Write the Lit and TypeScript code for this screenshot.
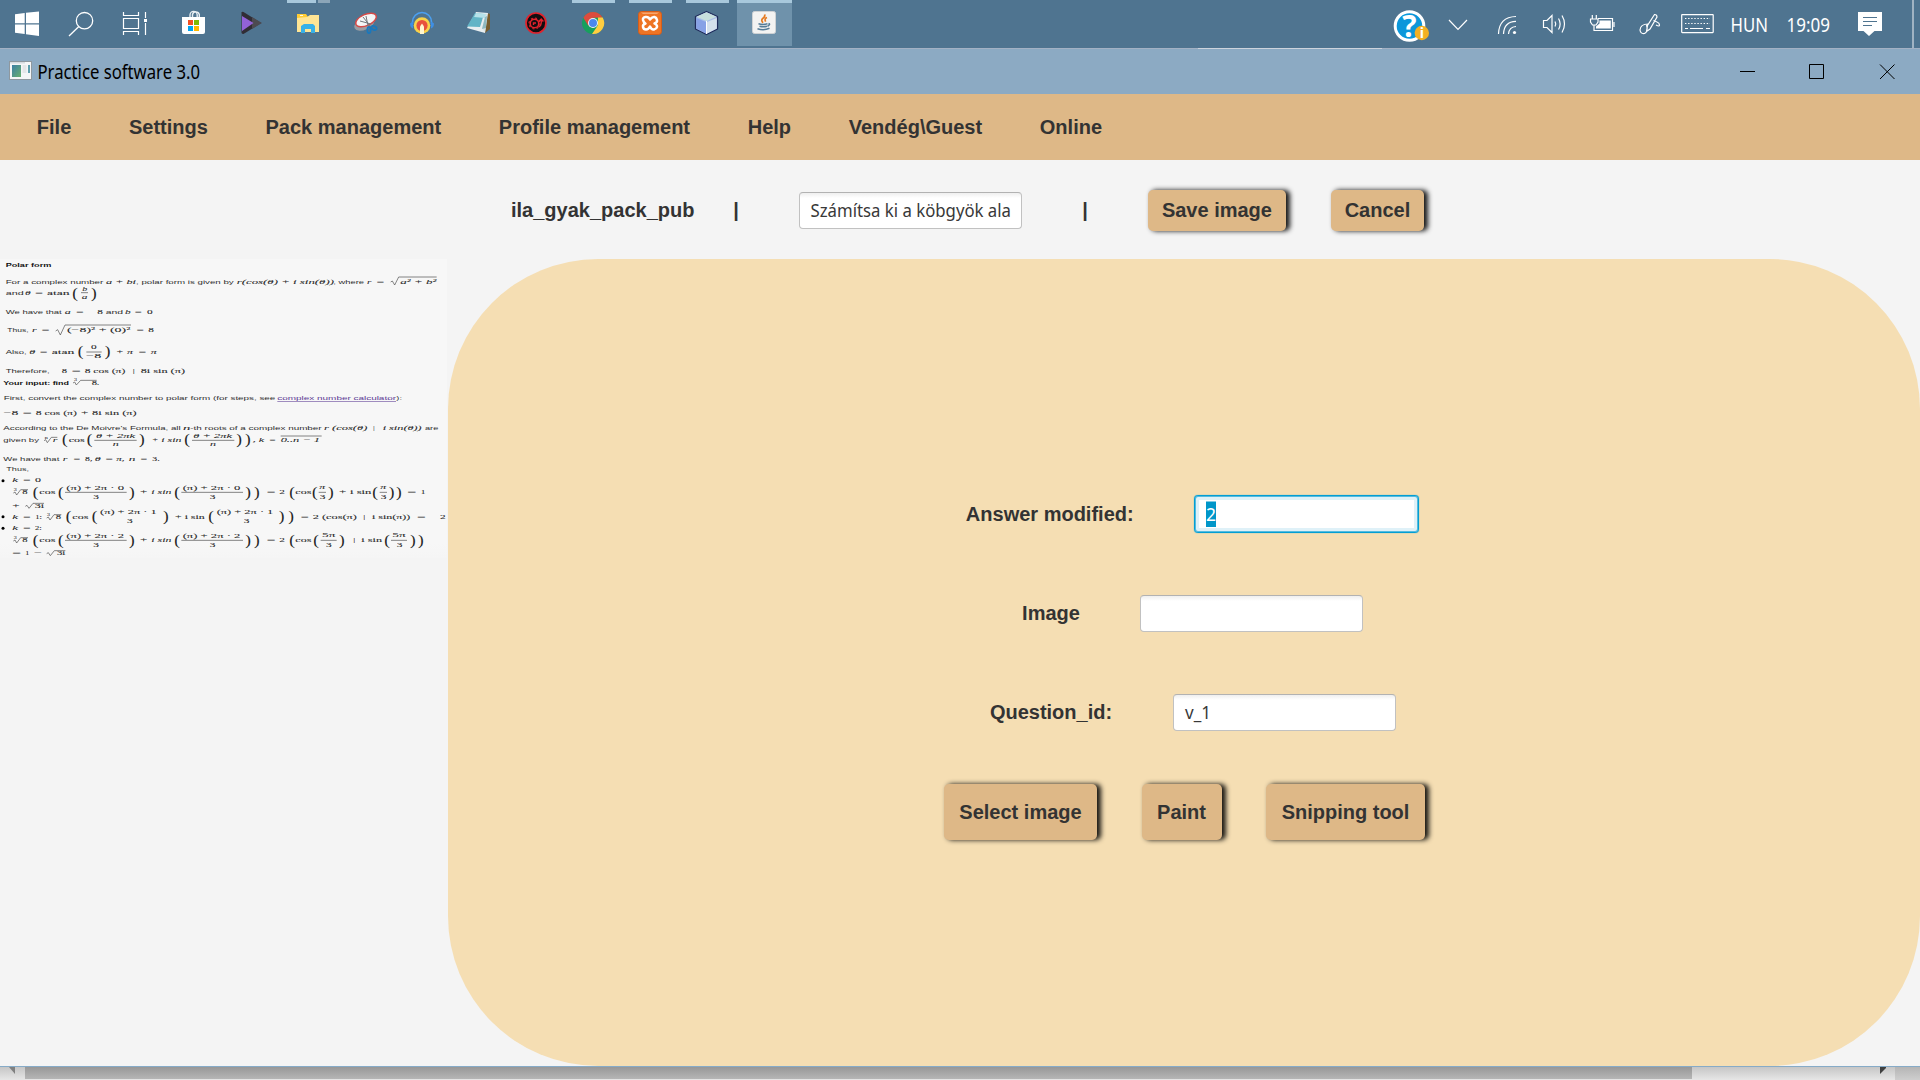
import { LitElement, html, svg, css } from "lit";
import { customElement } from "lit/decorators.js";

/* ---------- worked solution sheet ---------- */

type Run = [number, number, number, string, string];

const runs: Run[] = [];
const put = (cls: string, y: number, ...items: [number, number, string][]) =>
  items.forEach(([x, w, s]) => runs.push([x, y, w, s, cls]));
const paren = (y: number, ...items: [number, string][]) =>
  items.forEach(([x, s]) => runs.push([x, y, 17, s, "p"]));

put("b", 23, [17, 137, "Polar form"]);
put("s", 74, [17, 293, "For a complex number"], [408, 293, ", polar form is given by"], [1000, 92, ", where"]);
put("i", 74, [318, 90, "a + bi"], [710, 292, "r(cos(θ) + i sin(θ))"], [1101, 13, "r"], [1127, 27, "="], [1201, 108, "a² + b²"]);
put("s", 108, [17, 54, "and"]);
put("i", 108, [75, 17, "θ"], [103, 28, "="]);
put("m", 108, [141, 68, "atan"]);
paren(117, [217, "("], [273, ")"]);
put("i", 95, [247, 15, "b"]);
put("i", 121, [245, 17, "a"]);
put("s", 166, [17, 168, "We have that"], [317, 52, "and"]);
put("i", 166, [194, 18, "a"], [226, 27, "="], [375, 17, "b"], [402, 25, "="]);
put("m", 166, [292, 17, "8"], [441, 17, "0"]);
put("s", 220, [22, 64, "Thus,"]);
put("i", 220, [96, 14, "r"], [122, 28, "="], [407, 26, "="]);
put("m", 220, [201, 190, "(−8)² + (0)²"], [445, 17, "8"]);
put("s", 284, [17, 63, "Also,"]);
put("i", 284, [88, 18, "θ"], [117, 27, "="], [347, 24, "+"], [381, 18, "π"], [413, 27, "="], [452, 18, "π"]);
put("m", 284, [155, 68, "atan"]);
paren(292, [233, "("], [314, ")"]);
put("m", 269, [273, 17, "0"]);
put("m", 296, [259, 45, "−8"]);
put("s", 343, [17, 132, "Therefore,"]);
put("m", 343, [185, 16, "8"], [215, 27, "="], [254, 122, "8 cos (π)"], [398, 6, "|"], [422, 133, "8i sin (π)"]);
put("b", 377, [10, 197, "Your input: find"], [291, 6, "."]);
put("m", 377, [275, 16, "8"]);
put("s", 424, [11, 815, "First, convert the complex number to polar form (for steps, see"], [1189, 17, "):"]);
put("l", 424, [832, 356, "complex number calculator"]);
put("m", 468, [11, 44, "−8"], [68, 27, "="], [107, 124, "8 cos (π)"], [243, 22, "+"], [276, 134, "8i sin (π)"]);
put("s", 513, [10, 532, "According to the De Moivre's Formula, all"], [571, 394, "-th roots of a complex number"], [1275, 40, "are"]);
put("i", 513, [549, 22, "n"], [972, 130, "r (cos(θ)"], [1118, 6, "|"], [1148, 117, "i sin(θ))"]);
put("s", 548, [10, 107, "given by"]);
put("i", 548, [158, 14, "r"], [455, 20, "+"], [484, 60, "i sin"], [758, 34, ", k"], [806, 22, "="], [842, 118, "0..n − 1"]);
put("m", 548, [206, 48, "cos"]);
put("i", 536, [288, 117, "θ + 2πk"], [580, 116, "θ + 2πk"]);
put("i", 562, [338, 18, "n"], [630, 18, "n"]);
paren(556, [186, "("], [260, "("], [417, ")"], [553, "("], [709, ")"], [735, ")"]);
put("s", 606, [10, 168, "We have that"]);
put("i", 606, [188, 14, "r"], [218, 24, "="], [284, 18, "θ"], [314, 26, "="], [349, 25, "π,"], [386, 20, "n"], [419, 24, "="]);
put("m", 606, [255, 22, "8,"], [457, 22, "3."]);
put("s", 636, [19, 68, "Thus,"]);

put("i", 670, [37, 17, "k"], [67, 27, "="]);
put("m", 670, [105, 18, "0"]);

const wideRow = (dy: number, k: string) => {
  put("m", 705 + dy, [67, 16, "8"], [118, 48, "cos"], [420, 22, "+"], [800, 26, "="], [838, 17, "2"], [886, 48, "cos"]);
  put("i", 705 + dy, [454, 60, "i sin"]);
  put("m", 693 + dy, [199, 173, `(π) + 2π · ${k}`], [548, 173, `(π) + 2π · ${k}`]);
  put("m", 719 + dy, [280, 17, "3"], [629, 17, "3"]);
  paren(713 + dy, [98, "("], [174, "("], [387, ")"], [523, "("], [736, ")"], [762, ")"], [868, "("]);
};
wideRow(0, "0");
put("m", 705, [1017, 22, "+"], [1050, 64, "i sin"], [1222, 27, "="], [1262, 14, "1"]);
put("i", 691, [958, 18, "π"], [1141, 18, "π"]);
put("m", 719, [959, 17, "3"], [1142, 17, "3"]);
paren(713, [936, "("], [984, ")"], [1117, "("], [1166, ")"], [1188, ")"]);
put("m", 746, [37, 22, "+"], [104, 28, "3i"]);

put("i", 780, [37, 17, "k"], [67, 27, "="]);
put("m", 780, [106, 20, "1:"], [167, 16, "8"], [217, 48, "cos"], [525, 20, "+"], [554, 60, "i sin"], [902, 24, "="],
  [938, 133, "2 (cos(π)"], [1090, 6, "|"], [1116, 115, "i sin(π))"], [1251, 26, "="], [1320, 17, "2"]);
put("m", 765, [300, 170, "(π) + 2π · 1"], [650, 170, "(π) + 2π · 1"]);
put("m", 791, [381, 17, "3"], [731, 17, "3"]);
paren(786, [197, "("], [275, "("], [489, ")"], [625, "("], [836, ")"], [865, ")"]);

put("i", 814, [37, 17, "k"], [67, 27, "="]);
put("m", 814, [105, 20, "2:"]);
wideRow(144, "2");
put("m", 849, [1060, 6, "|"], [1084, 62, "i sin"]);
put("m", 835, [966, 40, "5π"], [1177, 40, "5π"]);
put("m", 863, [978, 17, "3"], [1190, 17, "3"]);
paren(857, [940, "("], [1017, ")"], [1153, "("], [1230, ")"], [1254, ")"]);
put("m", 888, [37, 26, "="], [76, 12, "1"], [103, 24, "−"], [171, 25, "3i"]);

put("x", 367, [222, 9, "3"]);
put("x", 540, [134, 9, "n"]);
put("x", 697, [41, 9, "3"]);
put("x", 841, [41, 9, "3"]);
put("x", 772, [141, 9, "3"]);

const rules = [
  "M243 101H264", "M259 279H305", "M283 544H410", "M576 544H703", "M842 531H965",
  "M195 700H380", "M544 700H729", "M956 700H978", "M1139 700H1161",
  "M195 844H380", "M544 844H729", "M962 844H1010", "M1173 844H1221",
  "M1172 69l5 -3 7 12 12 -24H1310", "M167 216l6 -4 8 16 14 -30H393",
  "M219 372l5 -3 5 9 13 -14H290", "M132 545l5 -3 5 9 12 -16H172",
  "M40 702l5 -3 5 9 12 -16H84", "M40 846l5 -3 5 9 12 -16H84", "M140 777l5 -3 5 9 12 -16H184",
  "M76 742l5 -3 6 9 12 -15H132", "M140 884l5 -3 6 9 12 -15H196",
].join("");

@customElement("solution-sheet")
export class SolutionSheet extends LitElement {
  static styles = css`
    :host { display: block; width: 447px; height: 299px; background: linear-gradient(#f7f7f7 95%, #f5f5f5); }
    svg { display: block; width: 448px; height: 299px; }
    text { font-size: 17px; fill: #2e2e2e; }
    .s, .b, .l { font-family: "Liberation Sans", Arial, sans-serif; }
    .b { font-weight: 700; fill: #111; }
    .l { fill: #5b3a94; text-decoration: underline; }
    .m, .i, .p, .x { font-family: "Liberation Serif", "Times New Roman", serif; fill: #242424; stroke: #242424; stroke-width: 0.15; }
    .m, .i { font-size: 19px; }
    .i { font-style: italic; }
    .x { font-size: 11px; }
    .p { font-size: 46px; }
    .rule { fill: none; stroke: #4a4a4a; stroke-width: 2; }
  `;
  render() {
    return html`<svg viewBox="0 0 1344 897">
      ${runs.map(([x, y, w, s, c]) => svg`<text class=${c} x=${x} y=${y} textLength=${w} lengthAdjust="spacingAndGlyphs">${s}</text>`)}
      <path class="rule" d=${rules} />
      <circle cx="9" cy="665" r="4.5" /><circle cx="9" cy="773" r="4.5" /><circle cx="9" cy="808" r="4.5" />
    </svg>`;
  }
}

/* ---------- taskbar ---------- */

interface Cell { x: number; w: number; art: unknown; run?: boolean; }

const launchers: Cell[] = [
  { x: 0, w: 54, art: svg`<path fill="#fff" d="M15 14.300L24.700 13V23.300H15zM26 12.800L39 11.500V23.300H26zM15 24.600H24.700V34L15 32.700zM26 24.600H39V36L26 34.200z"/>` },
  { x: 54, w: 54, art: svg`<g fill="none" stroke="#fff" stroke-width="1.3"><circle cx="84.5" cy="20.7" r="8.2"/><path d="M78.6 26.8L69 36"/></g>` },
  { x: 108, w: 57, art: svg`<g fill="none" stroke="#fff" stroke-width="1.2"><path d="M123.500 12V15.500H138.500V12M123.500 35V31.500H138.500V35M123.500 18.500H138.500V28.500H123.500zM145.500 12V18M145.500 23V35"/></g><path fill="#fff" d="M144 19h3v3h-3z"/>` },
  { x: 165, w: 57, art: svg`<path fill="none" stroke="#e8eef2" stroke-width="1.4" d="M190 18V15a3.6 3.6 0 0 1 7.2 0V18M192.500 18V14.500a3.500 3.500 0 0 1 6.800 0V18"/><path fill="#fff" d="M182 17H205V32a2 2 0 0 1-2 2H184a2 2 0 0 1-2-2z"/><path fill="#f25022" d="M188 20h5v5h-5z"/><path fill="#7fba00" d="M194 20h5v5h-5z"/><path fill="#00a4ef" d="M188 26h5v5h-5z"/><path fill="#ffb900" d="M194 26h5v5h-5z"/>` },
  { x: 222, w: 57, art: svg`<path fill="#312d35" d="M241.500 12.500q.5-1 2-.5L261 23 243.500 34q-1.500 0-2-1z"/><path fill="#4c4a50" d="M252 17L262 23 252 29z"/><path fill="#9262d8" d="M242 16L253.500 23 242 31z"/>` },
  { x: 279, w: 57, art: svg`<path fill="#fc3" d="M297 14h9l2 3v2h-11z"/><path fill="#ffe594" d="M297 18l10-1 3-2h9v17h-22z"/><path fill="#fffbe8" d="M300 15h3v1h-3z"/><path fill="#38b1e7" d="M301 33V26l3-2h9l2 2v7h-4v-4h-6v4z"/>` },
  { x: 336, w: 57, art: svg`<ellipse cx="364.500" cy="23.500" rx="11" ry="6" fill="#9a9da3" transform="rotate(-26 364.500 23.500)"/><ellipse cx="366" cy="20" rx="11" ry="5.600" fill="#f4f5f6" stroke="#d44a48" stroke-width="1.400" transform="rotate(-24 366 20)"/><path d="M360 21l11 3M366 16l2 10M363 17l8 10" stroke="#71767b" stroke-width="1"/><g fill="none" stroke="#1a78bd" stroke-width="1.700"><ellipse cx="369" cy="30" rx="1.700" ry="3.200"/><ellipse cx="374" cy="28" rx="2.800" ry="1.800" transform="rotate(25 374 28)"/></g>` },
  { x: 393, w: 57, art: svg`<path fill="none" stroke="#4ba0f2" stroke-width="1.600" d="M412.500 24v-2a9.500 9.500 0 0 1 19 0v2"/><path fill="#3e8fe5" d="M410 23.500l3-2v7q-3-1-3-5zM434 23.500l-3-2v7q3-1 3-5z"/><circle cx="422" cy="25.500" r="8.300" fill="#f8d24a"/><circle cx="422" cy="25.500" r="5.600" fill="#e8513d"/><path fill="#fff6cf" d="M420 34v-7.500l2-3 2 3V34z"/>` },
  { x: 450, w: 57, art: svg`<path fill="#785d2f" d="M487 13l3 1v15l-5 4z"/><path fill="#e8eef0" d="M476 12l12 1-3 20-18-5z"/><path fill="#62b4c6" d="M475 13l9 1-4 13-13-.5z"/><path fill="#b5e1e9" d="M476 13l11 1-2 4-11-1z"/><path fill="#d9e3e5" d="M482 28l4-14 1 1-2 17z"/><path fill="#8fb9c1" d="M485 17l2-1-1 12-4 1z"/>` },
  { x: 507, w: 57, art: svg`<circle cx="536" cy="23" r="10" fill="#120d10" stroke="#e2222c" stroke-width="1.700"/><g fill="none" stroke="#e2222c"><circle cx="534.500" cy="23.500" r="4.300" stroke-width="1.600"/><circle cx="534.500" cy="23.500" r="5.500" stroke-width="1.100" stroke-dasharray="2 2.300"/><path stroke-width="1.400" d="M536 23h-2.500v2M538.500 27q3-1 2.800-6M539 21.500l2.200-2.500 2.200 2.500"/></g>` },
  { x: 564, w: 57, run: true, art: svg`<circle cx="593" cy="23" r="11" fill="#17a05d"/><path fill="#dc4b3e" d="M583.300 17.800A11 11 0 0 1 602.700 17.800H593l-4.700 8z"/><path fill="#ffcd40" d="M602.700 17.500A11 11 0 0 1 592 34L597.800 25.500 598 17.500z"/><circle cx="593" cy="23" r="5" fill="#f3f3f3"/><circle cx="593" cy="23" r="4" fill="#4a87ee"/>` },
  { x: 621, w: 57, run: true, art: svg`<rect x="638.500" y="11.500" width="23" height="23" rx="3" fill="#ee7424" stroke="#d65d18"/><path fill="#f8a66e" d="M641 12.500h18l-2 1.500h-14z"/><path fill="none" stroke="#fff" stroke-width="2.500" stroke-linejoin="round" d="M650 19.500q-1.500-3-4.500-2.500t-2.500 3 2.500 3.500q-3 1-2.500 3.500t3 2.500 4-3q1.500 3.500 4 3t3-2.500-2.500-3.500q3-1 2.500-3.500t-2.500-3-4.500 2.500z"/>` },
  { x: 678, w: 57, run: true, art: svg`<path fill="#a9bfe9" stroke="#202c5b" stroke-width="1.300" stroke-linejoin="round" d="M706.500 11.500L717.500 16.500V29L706.500 34.500 695.500 29V16.500z"/><path fill="#c8e0dd" d="M706.500 12.300L716.500 16.800 706.500 21 696.500 16.800z"/><path fill="#87a1e6" d="M696.300 18L706 22V33.400L696.300 28.600z"/><path fill="#d5e1ec" d="M707 22L716.800 18V28.600L707 33.400z"/><path stroke="#fff" stroke-width="1" d="M706.500 21V34"/>` },
  { x: 735, w: 57, art: svg`<path fill="#6f92ab" d="M737 0h55v46h-55z"/><path fill="#a8c8dc" d="M737 0h55v3h-55z"/><rect x="752.500" y="11.500" width="23" height="22" rx="2" fill="#f3f3f2" stroke="#cfd2d4"/><path fill="none" stroke="#e57b22" stroke-width="1.700" d="M764.500 14.500q1 2-1.500 3.800t0 4.500M767 17.500q-3 1-1.300 4.200"/><path fill="none" stroke="#557c98" stroke-width="1.500" d="M758.500 23.800q4.500 1.200 9 0M768.500 23.500q2.500.5-1 2.800M759.500 26.300q4 1 7.500 0M757.500 28.800q6.500 2 12-.5"/>` },
];

const tray: Cell[] = [
  { x: 1386, w: 50, art: svg`<circle cx="1409.500" cy="26" r="14.300" fill="#0b97da" stroke="#fff" stroke-width="3"/><text class="q" x="1409.500" y="36.500" text-anchor="middle">?</text><circle cx="1421.800" cy="33" r="7.200" fill="#f4b022"/><text class="n" x="1421.800" y="38" text-anchor="middle">i</text>` },
  { x: 1436, w: 44, art: svg`<path class="w" d="M1449 20l9 9.300 9-9.300"/>` },
  { x: 1480, w: 48, art: svg`<path class="w" d="M1498.500 34Q1499 17 1516 16.500M1503.500 34Q1504 21.500 1516 21.300M1508.500 34Q1509 27 1516 26.500"/><circle cx="1514.500" cy="32.500" r="1.600" fill="#fff"/>` },
  { x: 1528, w: 50, art: svg`<path class="w" d="M1543.500 20.500H1547l5-5V32.500l-5-5h-3.500zM1555 21.500q1.500 2.500 0 5M1558.500 18.500q3.300 5.500 0 11M1562 15.500q5 8.500 0 17"/>` },
  { x: 1578, w: 48, art: svg`<path class="w" d="M1598 18.500h14.500v12h-18.500V25M1614 22v5"/><path fill="#fff" d="M1599.500 20.500h11.300v8h-14.800v-2l3.500-3z"/><path class="w" d="M1592.300 15v4M1596.300 15v4M1590.500 19h7.500v3l-2 3h-3.500l-2-3z"/>` },
  { x: 1626, w: 44, art: svg`<path class="w" d="M1646.500 31.500l1-6 7-11q2.500 0 2.500 2.500l-7 12zM1653.500 20.500l3.500 1.500q2.500 1 2.500 3t-3.500 0M1648 24q-7.500 0-8 6 .5 4 4.500 3.500 4-2 2-8.500"/>` },
  { x: 1670, w: 50, art: svg`<rect class="w" x="1681.700" y="14.600" width="31.500" height="18" rx=".5"/><path fill="none" stroke="#fff" stroke-width="1.200" stroke-dasharray="1.400 1.700" d="M1685 18.500h25M1685 23.500h25"/><path class="w" d="M1685 28.500h3M1690 28.500h13M1706 28.500h4"/>` },
  { x: 1720, w: 56, art: svg`<text class="t" x="1730.500" y="31.500" textLength="37.500" lengthAdjust="spacingAndGlyphs">HUN</text>` },
  { x: 1776, w: 64, art: svg`<text class="t" x="1786.500" y="31.500" textLength="43.500" lengthAdjust="spacingAndGlyphs">19:09</text>` },
  { x: 1840, w: 80, art: svg`<path fill="#fff" d="M1858 12h24v19h-7.500l-5.500 5-5.500-5h-5.500z"/><path stroke="#4f7490" stroke-width="1.200" d="M1863 17.500h14M1863 21.500h14M1863 25.500h9"/><path fill="#a0b3c3" d="M1912 0h2v48h-2z"/>` },
];

@customElement("task-bar")
export class TaskBar extends LitElement {
  static styles = css`
    :host { display: flex; flex-direction: column; flex: none; background: #4f7490; }
    .strip { display: flex; justify-content: space-between; height: 48px; }
    .line { height: 1px; background: linear-gradient(90deg, #a3b1c4 1198px, #cdd3dc 1198px, #cdd3dc 1382px, #a3b1c4 1382px); }
    .group { display: flex; }
    svg { display: block; height: 48px; flex: none; }
    .w { fill: none; stroke: #fff; stroke-width: 1.2; }
    .t { font: 19px "Noto Sans", "Open Sans", sans-serif; fill: #fff; }
    .q { font: 700 30px "Open Sans", sans-serif; fill: #fff; }
    .n { font: 700 14px "Open Sans", sans-serif; fill: #fff; }
  `;
  private cell(c: Cell) {
    return html`<svg width=${c.w} height="48" viewBox="${c.x} 0 ${c.w} 48">
      ${c.run ? svg`<rect x=${c.x + 8} y="0" width="43" height="3" fill="#a8c8dc"/>` : ""}
      ${c.x === 279 ? svg`<path fill="#a8c8dc" d="M287 0h29v3h-29z"/><path fill="#8ba5b8" d="M318 0h12v3h-12z"/>` : ""}
      ${c.art}
    </svg>`;
  }
  render() {
    return html`
      <div class="strip">
        <div class="group">${launchers.map((c) => this.cell(c))}</div>
        <div class="group">${tray.map((c) => this.cell(c))}</div>
      </div>
      <div class="line"></div>`;
  }
}

/* ---------- application window ---------- */

@customElement("app-root")
export class AppRoot extends LitElement {
  static styles = css`
    :host { display: flex; flex-direction: column; width: 1920px; height: 1080px; overflow: hidden; background: #f4f4f4;
      font-family: "Liberation Sans", Arial, sans-serif; font-size: 20px; color: #333; }
    * { box-sizing: border-box; }
    .title { display: flex; justify-content: space-between; height: 45px; background: #8caac3; flex: none; }
    .title svg { display: block; }
    .caption { font: 19.5px "Noto Sans", "Open Sans", sans-serif; fill: #000; }
    .menu { display: flex; align-items: center; gap: 57.7px; height: 66px; padding: 0 0 0 36.8px; background: #deb887; font-weight: 700; flex: none; }
    .menu span { white-space: nowrap; }
    .tools { display: flex; align-items: center; height: 99px; padding: 1px 0 0 511px; font-weight: 700; flex: none; }
    .bar { width: 6px; margin: 0 60px 0 38.500px; text-align: center; }
    .bar.second { margin: 0 60px 0 60px; }
    .field { display: block; width: 223px; height: 37px; padding: 0 10px; background: linear-gradient(#efefef, #fff 5px); border: 1px solid #c1c1c1; border-top-color: #b2b2b2; border-radius: 4px; }
    .field svg { display: block; width: 201px; height: 35px; overflow: visible; }
    .field text { font: 18px "Noto Sans", "Open Sans", sans-serif; fill: #383838; }
    .field.focus { width: 225px; height: 38px; background: #fff; border: 1px solid #039ed3; box-shadow: inset 0 0 0 1px #55bbdf, inset 0 0 0 4px #dff1f8, 0 0 1px #039ed3; }
    .field.focus .picked { fill: #fff; }
    .btn { display: flex; align-items: center; justify-content: center; height: 41px; border-radius: 5px; background: #deb887; box-shadow: 3.5px 0 5px rgba(0, 0, 0, 0.9); white-space: nowrap; }
    .save { width: 138px; margin-right: 45px; }
    .cancel { width: 93px; }
    .body { display: flex; flex: none; height: 807px; }
    .side { width: 448px; flex: none; }
    .panel { flex: 1; display: flex; flex-direction: column; align-items: center; padding-top: 236px; border-radius: 150px; background: #f5deb3; font-weight: 700; }
    .row { display: flex; align-items: center; height: 38px; margin: 0 0 61px 17.5px; gap: 60.5px; }
    .row.last { margin-bottom: 53px; }
    .row.first { gap: 60px; margin-left: 16.5px; }
    .actions { display: flex; gap: 44.500px; margin-left: 1px; }
    .actions .btn { height: 56px; }
    .a1 { width: 153px; } .a2 { width: 80px; } .a3 { width: 159px; }
    .edge { height: 14px; flex: none; display: flex; border-top: 1px solid #86abc8; background: linear-gradient(#c6c6c6, #e6e6e6); }
    .arrow { width: 25px; }
    .thumb { width: 1667px; height: 12px; background: linear-gradient(#989898, #b6b6b6); }
    .rest { width: 203px; }
    .corner { width: 25px; background: linear-gradient(#b5b5b5, #cecece); }
    .edge svg { display: block; }
  `;
  private menu = ["File", "Settings", "Pack management", "Profile management", "Help", "Vendég\\Guest", "Online"];

  render() {
    return html`
      <task-bar></task-bar>
      <header class="title">
        <svg width="300" height="45" viewBox="0 49 300 45">
          <defs><linearGradient id="g" x2="1" y2="1"><stop stop-color="#3d7fa5" /><stop offset="1" stop-color="#69b06e" /></linearGradient></defs>
          <rect x="9.500" y="61.500" width="22" height="18" fill="#f5f6f7" stroke="#8e989f" />
          <path fill="#d7dbe0" d="M10 62h15v1.500h-15z" />
          <path fill="url(#g)" d="M12 65h9v12h-9z" />
          <path fill="#e4e6e8" d="M22.500 65h4v8h-4z" />
          <path fill="#5c9eae" d="M28 65h2v8h-2z" />
          <text class="caption" x="37.500" y="79" textLength="162.500" lengthAdjust="spacingAndGlyphs">Practice software 3.0</text>
        </svg>
        <svg width="220" height="45" viewBox="1700 49 220 45" fill="none" stroke="#000">
          <path d="M1740 71.500h15M1809.500 64.500h14v14h-14zM1880 64.500l14.500 14.500M1894.500 64.500L1880 79" />
        </svg>
      </header>
      <nav class="menu">${this.menu.map((m) => html`<span>${m}</span>`)}</nav>
      <section class="tools">
        <span>ila_gyak_pack_pub</span><span class="bar">|</span>
        <div class="field"><svg><text x="0.5" y="24" textLength="200.500" lengthAdjust="spacingAndGlyphs">Számítsa ki a köbgyök ala</text></svg></div>
        <span class="bar second">|</span>
        <div class="btn save">Save image</div>
        <div class="btn cancel">Cancel</div>
      </section>
      <main class="body">
        <aside class="side"><solution-sheet></solution-sheet></aside>
        <section class="panel">
          <div class="row first"><span>Answer modified:</span>
            <div class="field focus"><svg><rect x="1" y="5.500" width="10" height="25.500" fill="#0096c9" /><text class="picked" x="1" y="24.500" textLength="10" lengthAdjust="spacingAndGlyphs">2</text></svg></div></div>
          <div class="row"><span>Image</span><div class="field"></div></div>
          <div class="row last"><span>Question_id:</span>
            <div class="field"><svg><text x="1" y="24" textLength="26" lengthAdjust="spacingAndGlyphs">v_1</text></svg></div></div>
          <div class="actions">
            <div class="btn a1">Select image</div>
            <div class="btn a2">Paint</div>
            <div class="btn a3">Snipping tool</div>
          </div>
        </section>
      </main>
      <footer class="edge">
        <div class="arrow"><svg width="25" height="13"><path fill="#808080" d="M9 0h6v7z" /></svg></div>
        <div class="thumb"></div>
        <div class="rest"><svg width="203" height="13"><path fill="#404040" d="M188 0h6v1l-6 6z" /></svg></div>
        <div class="corner"></div>
      </footer>`;
  }
}
